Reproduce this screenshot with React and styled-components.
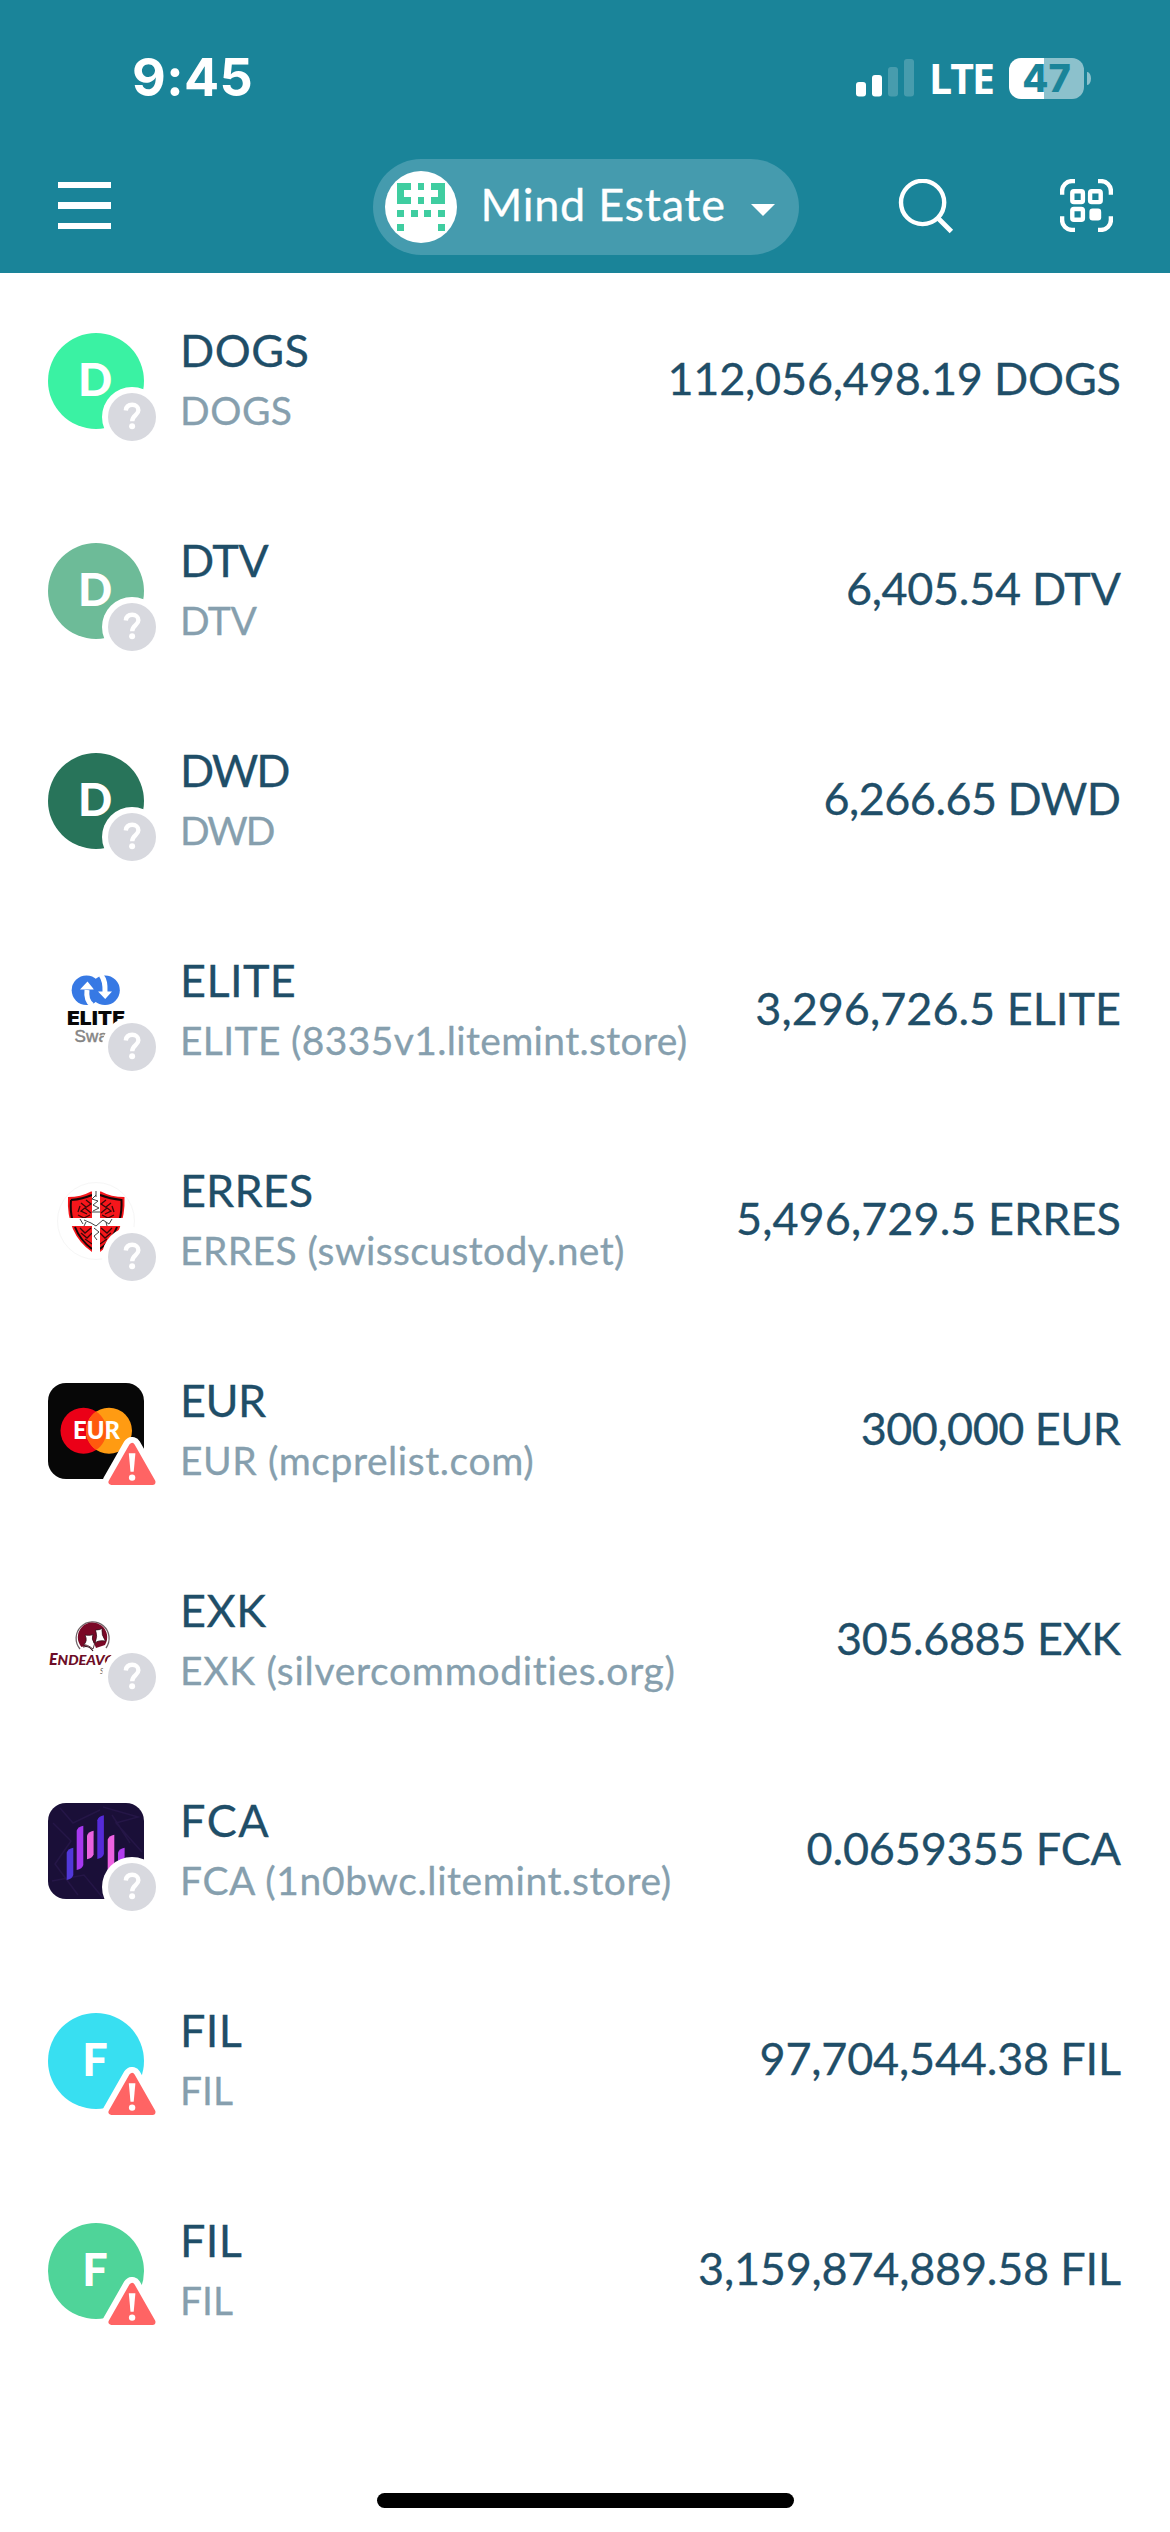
import React from "react";
import styled, { createGlobalStyle } from "styled-components";

const GlobalStyle = createGlobalStyle`
  * { box-sizing: border-box; }
  body { margin: 0; background: #fff; font-family: Lato, "Open Sans", sans-serif; font-variant-ligatures: none; }
`;

const Screen = styled.div`
  display: flex;
  flex-direction: column;
  width: 1170px;
  height: 2532px;
  background: #fff;
  overflow: hidden;
`;

const Header = styled.header`
  display: flex;
  flex-direction: column;
  height: 273px;
  background: #1a8499;
  color: #fff;
`;

const StatusBar = styled.div`
  display: flex;
  align-items: center;
  justify-content: space-between;
  height: 141px;
  padding: 15px 79px 0 132px;
  font-family: Inter, sans-serif;
`;

const Time = styled.span`
  font-size: 52px;
  font-weight: 700;
  line-height: 60px;
  letter-spacing: ${(p) => p.$spacing}px;
`;

const StatusIcons = styled.div`
  display: flex;
  align-items: center;
`;

const Network = styled.span`
  width: 62px;
  margin: 0 18px 0 15px;
  padding-bottom: 1px;
  font-family: "Open Sans", sans-serif;
  font-size: 41px;
  font-weight: 700;
  line-height: 42px;
  letter-spacing: -2px;
  white-space: nowrap;
`;

const Battery = styled.div`
  display: flex;
  align-items: center;
  gap: 3px;
`;

const BatteryBody = styled.div`
  display: flex;
  align-items: center;
  justify-content: center;
  width: 75px;
  height: 41px;
  border-radius: 12px;
  background: linear-gradient(90deg, #fff 35px, #8cc1cc 35px);
  color: #1a8499;
  font-size: 38px;
  font-weight: 800;
  line-height: 41px;
`;

const BatteryNub = styled.div`
  width: 4px;
  height: 13px;
  border-radius: 0 4px 4px 0 / 0 7px 7px 0;
  background: #8cc1cc;
`;

const NavBar = styled.nav`
  display: grid;
  grid-template-columns: 1fr auto 1fr;
  align-items: center;
  height: 132px;
  padding: 0 57px 0 58px;
`;

const MenuButton = styled.div`
  display: flex;
  flex-direction: column;
  gap: 14.5px;
  width: 53px;
  padding-bottom: 3px;
`;

const MenuLine = styled.div`
  height: 6.2px;
  background: #fff;
`;

const AccountPill = styled.div`
  display: flex;
  align-items: center;
  width: 426px;
  height: 96px;
  padding-left: 12px;
  border-radius: 48px;
  background: #459bae;
`;

const AccountName = styled.span`
  width: 266px;
  margin-left: 24px;
  padding-bottom: 6px;
  font-size: 45px;
  line-height: 60px;
  letter-spacing: ${(p) => p.$spacing}px;
  white-space: nowrap;
  -webkit-text-stroke: 0.3px currentColor;
`;

const Caret = styled.svg`
  width: 24px;
  height: 12px;
  margin: 5px 0 0 4px;
`;

const Actions = styled.div`
  display: flex;
  align-items: flex-start;
  justify-content: flex-end;
  gap: 106px;
`;

const List = styled.main`
  flex: 1;
  padding-top: 3px;
`;

const Row = styled.div`
  display: flex;
  align-items: center;
  height: 210px;
  padding: 0 49px 0 48px;
`;

const Avatar = styled.div`
  position: relative;
  width: 96px;
  height: 96px;
  flex: none;
`;

const LetterCircle = styled.div`
  display: flex;
  align-items: center;
  justify-content: center;
  width: 96px;
  height: 96px;
  padding: 0 2px 5px 0;
  border-radius: 50%;
  background: ${(p) => p.$color};
  color: #fff;
  font-size: 45px;
  font-weight: 900;
  line-height: 60px;
`;

const Badge = styled.svg`
  position: absolute;
  left: 54px;
  top: 54px;
  width: 60px;
  height: 60px;
`;

const Names = styled.div`
  display: flex;
  flex-direction: column;
  flex: 1;
  margin-left: 36px;
  padding-bottom: 2px;
  white-space: nowrap;
`;

const Title = styled.span`
  color: #1f4e68;
  font-size: 45px;
  line-height: 60px;
  letter-spacing: ${(p) => p.$spacing}px;
  -webkit-text-stroke: 0.3px currentColor;
`;

const Subtitle = styled.span`
  color: #869fae;
  font-size: 39px;
  line-height: 60px;
  letter-spacing: ${(p) => p.$spacing}px;
  -webkit-text-stroke: 0.3px currentColor;
`;

const Amount = styled.span`
  padding-bottom: 6px;
  color: #1f4e68;
  font-size: 45px;
  line-height: 60px;
  white-space: nowrap;
  letter-spacing: ${(p) => p.$spacing}px;
  margin-right: ${(p) => -p.$spacing}px;
  -webkit-text-stroke: 0.3px currentColor;
`;

const Footer = styled.footer`
  display: flex;
  justify-content: center;
  padding-bottom: 24px;
`;

const HomeIndicator = styled.div`
  width: 417px;
  height: 15px;
  border-radius: 8px;
  background: #000;
`;

const SignalIcon = () => (
  <svg width="58" height="38" viewBox="0 0 58 38" fill="#fff">
    <rect x="0" y="23" width="10" height="14.5" rx="3" />
    <rect x="16" y="16" width="10" height="21.5" rx="3" />
    <rect x="32" y="8" width="10" height="29.5" rx="3" opacity=".2" />
    <rect x="48" y="0" width="10" height="37.5" rx="3" opacity=".2" />
  </svg>
);

const IDENTICON = ["11.1.11", "1.....1", "11.1.11", ".......", "1.1.1.1", ".......", "1.....1"];

const Identicon = () => (
  <svg width="72" height="72" viewBox="0 0 72 72">
    <circle cx="36" cy="36" r="36" fill="#fff" />
    <g transform="translate(12 12) scale(6.857)" fill="#3fcda0" shapeRendering="crispEdges">
      {IDENTICON.flatMap((line, y) =>
        [...line].map((c, x) => (c === "1" ? <rect key={`${x}-${y}`} x={x} y={y} width="1" height="1" /> : null))
      )}
    </g>
  </svg>
);

const SearchIcon = () => (
  <svg width="56" height="56" viewBox="0 0 56 56" fill="none" stroke="#fff" strokeWidth="4.4">
    <circle cx="24.6" cy="23.5" r="21.6" />
    <path d="M39.9 39 53.4 52.5" strokeWidth="4.8" />
  </svg>
);

const ScanIcon = () => (
  <svg width="53" height="53" viewBox="0 0 53 53" fill="none" stroke="#fff" strokeWidth="4.4">
    <path d="M2.1 15.7V12A9.9 9.9 0 0 1 12 2.1H15M38 2.1H41A9.9 9.9 0 0 1 50.9 12V15.7M50.9 37.3V41A9.9 9.9 0 0 1 41 50.9H38M15 50.9H12A9.9 9.9 0 0 1 2.1 41V37.3" />
    <rect x="12.3" y="12.300" width="10.600" height="10.800" rx="1.600" />
    <rect x="30.100" y="12.300" width="10.600" height="10.800" rx="1.600" />
    <rect x="12.300" y="30" width="10.600" height="10.800" rx="1.600" />
    <rect x="29.400" y="29.600" width="11.800" height="11.800" rx="3.200" fill="#fff" stroke="none" />
  </svg>
);

const UnknownBadge = () => (
  <Badge viewBox="0 0 60 60">
    <circle cx="30" cy="30" r="30" fill="#fff" />
    <circle cx="30" cy="30" r="24" fill="#d8d9df" />
    <path d="M23.8 23.4C24.2 19.6 26.8 17.8 30.2 17.8C33.8 17.8 36.4 20 36.4 23.2C36.4 28 30.2 28.2 30.2 34.2" fill="none" stroke="#fff" strokeWidth="4.4" />
    <circle cx="30.1" cy="39.2" r="3" fill="#fff" />
  </Badge>
);

const WarningBadge = () => (
  <Badge viewBox="0 0 60 60">
    <path d="M30 9 9.5 45H50.5Z" fill="#fff" stroke="#fff" strokeWidth="18" strokeLinejoin="round" />
    <path d="M30 9 9.5 45H50.5Z" fill="#ff6464" stroke="#ff6464" strokeWidth="6" strokeLinejoin="round" />
    <path d="M26.8 16.3H33.4L31.7 34.8H28.5Z" fill="#fff" />
    <circle cx="30.1" cy="40.6" r="3.2" fill="#fff" />
  </Badge>
);

const EliteLogo = () => (
  <svg width="96" height="96" viewBox="0 0 96 96">
    <circle cx="38.5" cy="27.2" r="14.8" fill="#3779e4" />
    <circle cx="57" cy="27.2" r="14.8" fill="#3779e4" />
    <path d="M44 42C38.5 38 38.5 31 39 27M53 12C57 17 57.2 22 57 29" fill="none" stroke="#fff" strokeWidth="5" />
    <path d="M32 26.5 39.5 18.5 46 26.5ZM50 28.5H64L57.2 36Z" fill="#fff" />
    <path d="M46 18C47.5 21 48 25 46.5 31M49 25 48 34" fill="none" stroke="#3779e4" strokeWidth="3" />
    <text x="19" y="62" fontFamily="Inter, sans-serif" fontWeight="900" fontSize="19" textLength="58" lengthAdjust="spacingAndGlyphs" fill="#080808">ELITE</text>
    <text x="26.5" y="79" fontFamily="Liberation Sans, sans-serif" fontSize="17" textLength="43" stroke="#858585" strokeWidth=".5" fill="#858585">Swap</text>
  </svg>
);

const ErresLogo = () => (
  <svg width="96" height="96" viewBox="0 0 96 96" fill="none">
    <circle cx="48" cy="48" r="38.5" stroke="#f6f6f6" strokeWidth="1" />
    <path d="M20 24Q33 24 43 18.5H53Q63 24 76.5 24Q78 61 52 79H44Q18 61 20 24Z" fill="#f5161b" />
    <path d="M23 27Q35 26 44 22M52 22Q62 26 73.5 27Q74 38 71.5 47M23 27Q22 38 24.5 47M27 54Q32 67 44 76M52 76Q64 67 69 54" stroke="#160506" strokeWidth="2" />
    <g stroke="#3c0808" strokeWidth="1.3">
      <path d="M33 30 38 34 33 38 39 41M38 27 43 31 37 35 43 40M30 42 36 45 42 42M32 33 30 39M63 30 58 34 63 38 57 41M58 27 53 31 59 35 53 40M66 42 60 45 54 42M64 33 66 39" />
      <path d="M32 55 37 60 43 55M33 60 39 65 44 60M37 66 44 71M64 55 59 60 53 55M63 60 57 65 52 60M59 66 52 71" />
    </g>
    <path d="M44 16H52V45H80V53H52V81H44V53H17V45H44Z" fill="#fff" />
    <path d="M48 22 44 26 50 28 45 32 51 35 45 38M44 39H52M36 47 43 50 48 53 55 47 61 51 64 46M32 46 35 51M46 55 51 59 46 63 49 67M38 49 36 53M58 49 59 53M48 18V24" stroke="#444" strokeWidth="1" />
  </svg>
);

const EurLogo = () => (
  <svg width="96" height="96" viewBox="0 0 96 96">
    <rect width="96" height="96" rx="18" fill="#070707" />
    <circle cx="35.5" cy="47.7" r="23" fill="#eb0017" />
    <circle cx="61" cy="47.7" r="23" fill="#ff9b12" />
    <path d="M48.25 28.55A23 23 0 0 1 48.25 66.85A23 23 0 0 1 48.25 28.55Z" fill="#ff5a0e" />
    <text x="25" y="56.3" fontFamily="Lato, sans-serif" fontWeight="900" fontSize="24.5" textLength="47" lengthAdjust="spacingAndGlyphs" fill="#fff">EUR</text>
  </svg>
);

const EndeavourLogo = () => (
  <svg width="96" height="96" viewBox="0 0 96 96">
    <path d="M32 56A16.5 16.5 0 1 1 58 55" fill="none" stroke="#6f6266" strokeWidth="1.3" />
    <path d="M33.5 54A14.7 14.7 0 1 1 57 52L48 55 46 50Z" fill="#7a0826" />
    <path d="M37 42Q44 43 45 41Q43 46 46.5 51L45 56Q39 51 35.5 52Q40 48 37 42ZM47.5 37Q53 37 54 35Q53 42 57.5 48Q50 47 47 50Q50 43 47.5 37Z" fill="#fff" stroke="#35101c" strokeWidth=".8" />
    <path d="M35 54Q41 52 45 58" fill="none" stroke="#35101c" strokeWidth="1.2" />
    <text x="1" y="72.3" fontFamily="Lato, sans-serif" fontStyle="italic" fontWeight="900" fontSize="16" fill="#6d0d27">E<tspan fontSize="14" textLength="77" lengthAdjust="spacingAndGlyphs">NDEAVOUR</tspan></text>
    <text x="52" y="81" fontFamily="Lato, sans-serif" fontStyle="italic" fontSize="7" fill="#555">SILVER</text>
  </svg>
);

const FCA_BARS = [
  [18.7, 44.7, 77, "#5138d9"],
  [28.7, 22.7, 67, "#a638ef"],
  [39, 27.7, 56.3, "#ea62df"],
  [49.3, 12.3, 56, "#562bd9"],
  [59.7, 31.7, 75, "#ee62e2"],
  [70, 44.7, 66, "#b13def"],
];

const FcaLogo = () => (
  <svg width="96" height="96" viewBox="0 0 96 96">
    <rect width="96" height="96" rx="18" fill="#1a0f38" />
    <path d="M5 20 23 38 7 61 30 92M55 4 90 14 68 20 94 49M4 78 36 72 55 95M12 5 25 20 52 7M64 12 82 40" fill="none" stroke="#251647" strokeWidth="1.5" />
    {FCA_BARS.map(([x, top, bottom, color]) => (
      <path key={x} d={`M${x} ${top + 5}Q${x + 1} ${top + 1} ${x + 6.6} ${top}V${bottom - 5}Q${x + 5.6} ${bottom - 1} ${x} ${bottom}Z`} fill={color} />
    ))}
  </svg>
);

const ASSETS = [
  { title: "DOGS", sub: "DOGS", amount: "112,056,498.19 DOGS", letter: "D", color: "#3af2a3", tracking: [0.5, 0.5, -0.2] },
  { title: "DTV", sub: "DTV", amount: "6,405.54 DTV", letter: "D", color: "#6dbb98", tracking: [-0.5, -0.5, -0.33] },
  { title: "DWD", sub: "DWD", amount: "6,266.65 DWD", letter: "D", color: "#28745a", tracking: [-2, -2, -0.55] },
  { title: "ELITE", sub: "ELITE (8335v1.litemint.store)", amount: "3,296,726.5 ELITE", Logo: EliteLogo, tracking: [0.4, 0.35, 0] },
  { title: "ERRES", sub: "ERRES (swisscustody.net)", amount: "5,496,729.5 ERRES", Logo: ErresLogo, tracking: [0.1, 0.41, 0.05] },
  { title: "EUR", sub: "EUR (mcprelist.com)", amount: "300,000 EUR", Logo: EurLogo, warn: true, tracking: [-0.5, 0.58, -0.53] },
  { title: "EXK", sub: "EXK (silvercommodities.org)", amount: "305.6885 EXK", Logo: EndeavourLogo, tracking: [0.5, 0.7, -0.45] },
  { title: "FCA", sub: "FCA (1n0bwc.litemint.store)", amount: "0.0659355 FCA", Logo: FcaLogo, tracking: [1.5, 0.6, -0.18] },
  { title: "FIL", sub: "FIL", amount: "97,704,544.38 FIL", letter: "F", color: "#38dff1", warn: true, tracking: [0.4, 0, -0.2] },
  { title: "FIL", sub: "FIL", amount: "3,159,874,889.58 FIL", letter: "F", color: "#4fd499", warn: true, tracking: [0.4, 0, -0.22] },
];

const AssetRow = ({ title, sub, amount, letter, color, Logo, warn, tracking }) => (
  <Row>
    <Avatar>
      {Logo ? <Logo /> : <LetterCircle $color={color}>{letter}</LetterCircle>}
      {warn ? <WarningBadge /> : <UnknownBadge />}
    </Avatar>
    <Names>
      <Title $spacing={tracking[0]}>{title}</Title>
      <Subtitle $spacing={tracking[1]}>{sub}</Subtitle>
    </Names>
    <Amount $spacing={tracking[2]}>{amount}</Amount>
  </Row>
);

export default function App() {
  return (
    <Screen>
      <GlobalStyle />
      <Header>
        <StatusBar>
          <Time $spacing={0.4}>9:45</Time>
          <StatusIcons>
            <SignalIcon />
            <Network>LTE</Network>
            <Battery>
              <BatteryBody>47</BatteryBody>
              <BatteryNub />
            </Battery>
          </StatusIcons>
        </StatusBar>
        <NavBar>
          <MenuButton>
            <MenuLine />
            <MenuLine />
            <MenuLine />
          </MenuButton>
          <AccountPill>
            <Identicon />
            <AccountName $spacing={0.73}>Mind Estate</AccountName>
            <Caret viewBox="0 0 24 12"><path d="M0 0H24L12 12Z" fill="#fff" /></Caret>
          </AccountPill>
          <Actions>
            <SearchIcon />
            <ScanIcon />
          </Actions>
        </NavBar>
      </Header>
      <List>
        {ASSETS.map((asset, i) => (
          <AssetRow key={i} {...asset} />
        ))}
      </List>
      <Footer>
        <HomeIndicator />
      </Footer>
    </Screen>
  );
}
